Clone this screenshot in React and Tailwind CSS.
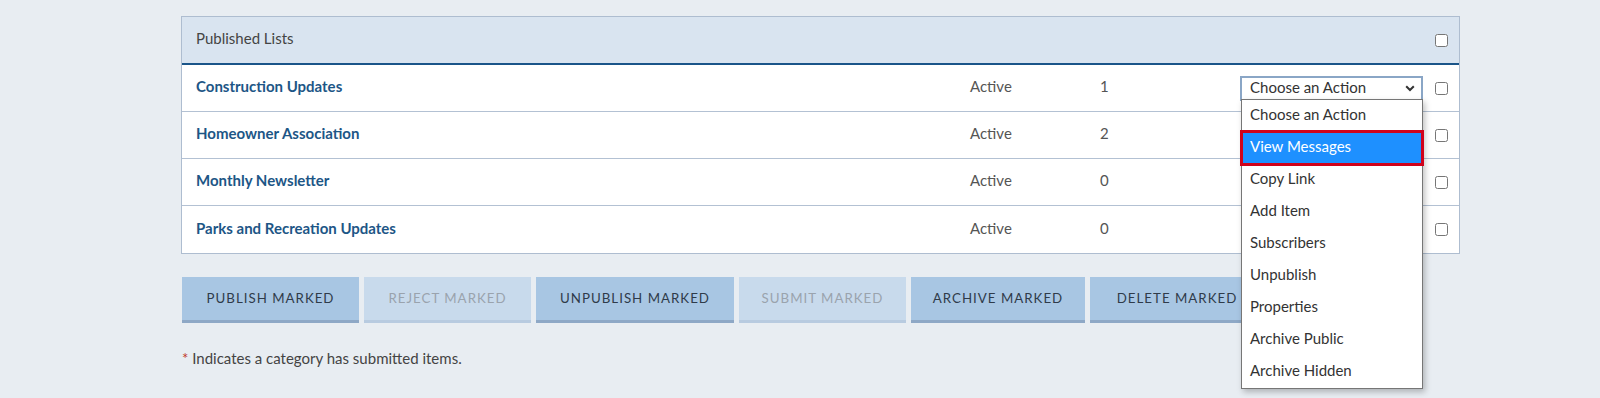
import React from 'react';

const font = { fontFamily: 'Lato, "Open Sans", sans-serif' };

const lists = [
  { name: 'Construction Updates', status: 'Active', count: 1 },
  { name: 'Homeowner Association', status: 'Active', count: 2 },
  { name: 'Monthly Newsletter', status: 'Active', count: 0 },
  { name: 'Parks and Recreation Updates', status: 'Active', count: 0 },
];

const options = [
  'Choose an Action',
  'View Messages',
  'Copy Link',
  'Add Item',
  'Subscribers',
  'Unpublish',
  'Properties',
  'Archive Public',
  'Archive Hidden',
];

const buttons = [
  { label: 'Publish Marked', w: 'w-[177px]', off: false },
  { label: 'Reject Marked', w: 'w-[167px]', off: true },
  { label: 'Unpublish Marked', w: 'w-[198px]', off: false },
  { label: 'Submit Marked', w: 'w-[167px]', off: true },
  { label: 'Archive Marked', w: 'w-[174px]', off: false },
  { label: 'Delete Marked', w: 'w-[174px]', off: false },
];

const Checkbox = () => (
  <input type="checkbox" className="m-0 h-[13px] w-[13px] shrink-0" readOnly />
);

const ActionSelect = ({ open }) => (
  <div className="relative w-[183px]">
    <div className="flex h-[25px] items-center justify-between border-2 border-[#8aa6c6] bg-white pb-[1px] pl-[8px] pr-[6px] text-[15px] text-[#333]">
      <span>Choose an Action</span>
      <svg width="10" height="7" viewBox="0 0 10 7" className="mt-[1px]">
        <path d="M1.2 1.2 L5 5 L8.8 1.2" fill="none" stroke="#333" strokeWidth="2" />
      </svg>
    </div>
    {open && (
      <div className="absolute left-[1px] top-[23px] z-10 w-[182px] border border-[#767676] bg-white shadow-[2px_3px_6px_rgba(0,0,0,0.25)]">
        {options.map((o, i) => (
          <div
            key={o}
            className={`flex h-[32px] items-center pb-[2px] pl-[8px] text-[15px] ${
              i === 1
                ? 'bg-[#1e90ff] text-white outline-3 outline-[#d0021b] -outline-offset-1'
                : 'text-[#333]'
            }`}
          >
            {o}
          </div>
        ))}
      </div>
    )}
  </div>
);

export default function App() {
  return (
    <div className="min-h-[398px] bg-[#e8edf2] pt-[16px]" style={font}>
      <div className="ml-[181px] w-[1279px] border border-[#aebdd0] bg-white">
        <div className="flex h-[48px] items-center justify-between border-b-2 border-[#1a5589] bg-[#d9e4f0] pl-[14px] pr-[11px]">
          <span className="pb-[3px] text-[15px] text-[#444]">Published Lists</span>
          <Checkbox />
        </div>
        {lists.map((l, i) => (
          <div
            key={l.name}
            className={`flex h-[47px] items-center pl-[14px] pr-[11px] ${
              i < lists.length - 1 ? 'border-b border-[#b3c1d3]' : ''
            }`}
          >
            <span className="w-[774px] pb-[3px] text-[15px] font-bold text-[#1d5686]">{l.name}</span>
            <span className="w-[130px] pb-[3px] text-[15px] text-[#555]">{l.status}</span>
            <span className="flex-1 pb-[3px] text-[15px] text-[#555]">{l.count}</span>
            <div className="mr-[12px] flex">
              {i === 0 ? <ActionSelect open /> : <div className="w-[183px]" />}
            </div>
            <Checkbox />
          </div>
        ))}
      </div>

      <div className="ml-[182px] mt-[23px] flex gap-[5px]">
        {buttons.map((b) => (
          <div
            key={b.label}
            className={`flex h-[46px] items-center justify-center border-b-[3px] text-[13.3px] uppercase tracking-[1px] ${b.w} ${
              b.off
                ? 'border-[#b8cbe0] bg-[#c8daec] text-[#9aa3ad]'
                : 'border-[#8ea8c6] bg-[#a8c6e3] text-[#2f3b4a]'
            }`}
          >
            {b.label}
          </div>
        ))}
      </div>

      <p className="ml-[182px] mt-[24px] text-[15px] text-[#444]">
        <span className="text-[#c0392b]">*</span> Indicates a category has submitted items.
      </p>
    </div>
  );
}
